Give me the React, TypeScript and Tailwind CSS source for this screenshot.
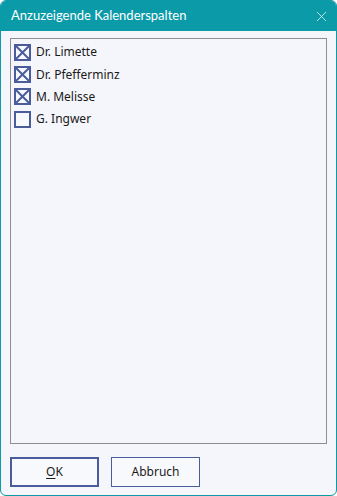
import { X } from 'lucide-react';

const rows = [
    { name: 'Dr. Limette', checked: true },
    { name: 'Dr. Pfefferminz', checked: true },
    { name: 'M. Melisse', checked: true },
    { name: 'G. Ingwer', checked: false },
];

const CheckBox = ({ checked }: { checked: boolean }) => (
    <div className="w-[17px] h-[17px] border-2 border-[#4a5c9a] bg-[#f8f9fc] shrink-0 flex items-center justify-center">
        {checked && (
            <svg width="13" height="13" viewBox="0 0 13 13">
                <path d="M0 0 L13 13 M13 0 L0 13" stroke="#4a5c9a" strokeWidth="2" />
            </svg>
        )}
    </div>
);

export default function App() {
    return (
        <div
            className="w-[337px] h-[496px] flex flex-col bg-[#f5f6fb] border border-[#0b9aa8] rounded-[6px] overflow-hidden text-[12px] text-[#1a1a1a]"
            style={{ fontFamily: '"Noto Sans", "Open Sans", sans-serif' }}
        >
            {/* Title bar */}
            <div className="h-[30px] bg-[#0b9aa8] flex items-center justify-between pl-[10px] pr-[6px] text-white shrink-0">
                <span className="text-[13px]" style={{ fontFamily: 'Lato, "Noto Sans", sans-serif' }}>
                    Anzuzeigende Kalenderspalten
                </span>
                <X size={17} strokeWidth={1} />
            </div>

            <div className="flex-1 flex flex-col px-[9px] pt-[7px] pb-[9px]">
                {/* Column list */}
                <div className="h-[406px] border border-[#8e8e8e] bg-[#f5f6fb] pt-[2px] pl-[3px] flex flex-col">
                    {rows.map(r => (
                        <div key={r.name} className="h-[22.4px] flex items-center gap-[5px]">
                            <CheckBox checked={r.checked} />
                            <span className="leading-none">{r.name}</span>
                        </div>
                    ))}
                </div>

                {/* Buttons */}
                <div className="mt-[13px] flex gap-[12px]">
                    <button className="w-[89px] h-[30px] border-2 border-[#4a5c9a] bg-[#f8f9fc] flex items-center justify-center">
                        <span><span className="underline underline-offset-2">O</span>K</span>
                    </button>
                    <button className="w-[89px] h-[30px] border border-[#4a5c9a] bg-[#f8f9fc] flex items-center justify-center">
                        Abbruch
                    </button>
                </div>
            </div>
        </div>
    );
}
